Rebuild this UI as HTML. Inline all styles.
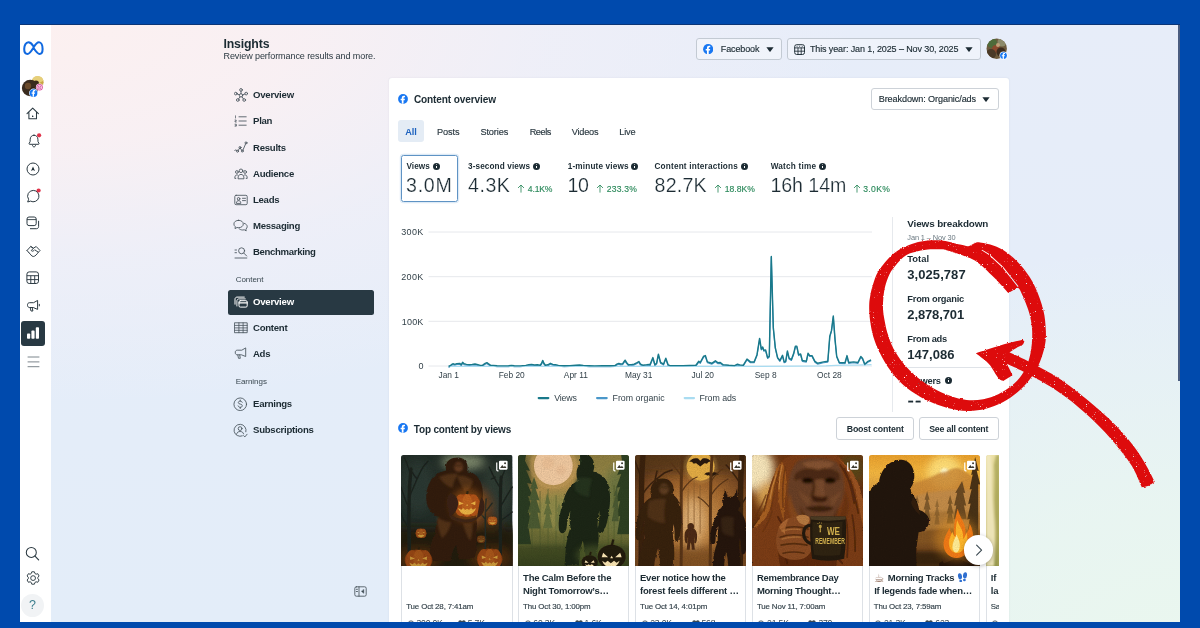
<!DOCTYPE html>
<html lang="en"><head><meta charset="utf-8"><title>Insights</title>
<style>
html,body{margin:0;padding:0}
body{width:1200px;height:628px;overflow:hidden;background:#004aad;position:relative;font-family:"Liberation Sans",sans-serif;color:#1c2b33}
#app{position:absolute;left:19.5px;top:25px;width:1160px;height:596.5px;overflow:hidden;
 background:
  radial-gradient(ellipse 820px 380px at 20px 0px, rgba(252,240,240,1) 0%, rgba(249,240,243,.95) 32%, rgba(243,240,247,.6) 62%, rgba(238,240,248,0) 100%),
  radial-gradient(ellipse 620px 420px at 1160px 640px, rgba(234,247,238,1) 0%, rgba(233,246,240,.85) 40%, rgba(230,240,246,0) 100%),
  linear-gradient(180deg,#e7edf9 0%,#e5edf9 40%,#e3edf9 100%);
 box-shadow:0 -1px 0 #0b3576}
#pg{position:absolute;left:-19.5px;top:-25px;width:1200px;height:628px;will-change:transform}
.abs{position:absolute;display:block}
.t{position:absolute;white-space:pre;display:block}
.t.m{-webkit-text-stroke:.15px currentColor}
.t.big{-webkit-text-stroke:.22px #fff}
.side{position:absolute;left:19.5px;top:25px;width:31px;height:597px;background:#fff}
.sidesel{position:absolute;left:20.7px;top:321.2px;width:24.4px;height:24.4px;border-radius:3px;background:#283943}
.help{position:absolute;left:20.9px;top:594.1px;width:23.2px;height:23.2px;border-radius:50%;background:#f1f3f5}
.navsel{position:absolute;left:228px;top:289.5px;width:146px;height:25px;border-radius:2.5px;background:#283943}
.btn{position:absolute;box-sizing:border-box;border:1px solid #c3cad3;border-radius:3px;background:rgba(255,255,255,.35)}
.btn.w{background:#fff;border-color:#cdd2d8}
.card{position:absolute;left:0;top:0}
.cardbg{position:absolute;left:388.7px;top:77.7px;width:620px;height:560px;background:#fff;border-radius:3px 3px 0 0;box-shadow:0 0 2px rgba(40,60,90,.10)}
.pill{position:absolute;left:398.3px;top:120px;width:25.7px;height:22.4px;border-radius:3px;background:#e4ecf5}
.vbox{position:absolute;box-sizing:border-box;left:400.9px;top:155px;width:56.7px;height:47.2px;border:1.3px solid #5f93c4;border-radius:2.5px;box-shadow:0 0 0 1.2px rgba(120,170,220,.25)}
.info{position:absolute;width:7.2px;height:7.2px;border-radius:50%;background:#1c2b33;display:block}
.info i{position:absolute;left:3px;top:3.1px;width:1.2px;height:2.6px;background:#fff;font-size:0;display:block}.info i::before{content:'';position:absolute;left:0;top:-1.8px;width:1.2px;height:1.1px;background:#fff;border-radius:50%}
.hr{position:absolute;height:1px;background:#dfe3e8}
.vr{position:absolute;width:1px;background:#e6e9ed}
.pc{position:absolute;box-sizing:border-box;top:455.2px;width:111.2px;height:190px;box-shadow:inset 0 0 0 1px #dde1e6;border-radius:2.5px;background:#fff;overflow:hidden}
.pc svg{position:absolute;left:0;top:0;display:block}
.posts{position:absolute;left:0;top:0;width:998.7px;height:628px;overflow:hidden}
.nextb{position:absolute;left:964px;top:535.4px;width:29.2px;height:29.2px;border-radius:50%;background:#fff;box-shadow:0 1px 4px rgba(0,0,0,.28)}

</style></head>
<body>
<div id="app"><div id="pg">

<div class="side"></div>
<!-- meta logo -->
<svg class="abs" style="left:23.2px;top:41.4px" width="20.8" height="14.2" viewBox="0 0 20.8 14.2"><path d="M10.4 5.2C8.7 2.4 7.2 1.2 5.4 1.2 2.9 1.2 1.2 4.5 1.2 8.1c0 3 1.2 4.9 3.3 4.9 2 0 3.400-2.100 5.900-6.300C12.700 2.800 14.100 1.200 16 1.200c2.200 0 3.600 3.200 3.600 6.900 0 3-1 4.900-3 4.900-2 0-3.400-2-6.200-6.300" fill="none" stroke="#1169e0" stroke-width="2.05" stroke-linecap="round" stroke-linejoin="round"/></svg>
<!-- avatar cluster -->
<svg class="abs" style="left:21px;top:74px" width="26" height="26" viewBox="0 0 26 26">
 <circle cx="16.6" cy="8.2" r="6" fill="#c9a545"/><path d="M11 6a6 6 0 0 1 11.500.800L16 10z" fill="#e6cf7a"/><circle cx="15" cy="9.500" r="3" fill="#3b2a1a"/>
 <circle cx="9.200" cy="14" r="8.300" fill="#3a2b1e"/><circle cx="7" cy="12" r="3.200" fill="#6b4a2a"/><circle cx="12" cy="16.500" r="3" fill="#241a12"/>
 <circle cx="18.600" cy="13.300" r="3.700" fill="#fff"/><circle cx="18.600" cy="13.300" r="3.200" fill="#d94b9c"/><rect x="16.700" y="11.400" width="3.800" height="3.800" rx="1.100" fill="none" stroke="#fff" stroke-width=".7"/><circle cx="18.600" cy="13.300" r=".8" fill="none" stroke="#fff" stroke-width=".6"/>
 <circle cx="12.500" cy="19.100" r="4.500" fill="#fff"/><circle cx="12.500" cy="19.100" r="3.900" fill="#1877f2"/><path d="M13 22.800v-3h1l.2-1.200H13v-.7c0-.4.200-.7.700-.7h.6v-1.100c-.3 0-.6-.1-1-.1-1 0-1.700.6-1.700 1.700v.9h-1v1.200h1v3z" fill="#fff"/>
</svg>
<!-- home -->
<svg class="abs" style="left:26.3px;top:107.2px" width="13.400" height="12.600" viewBox="0 0 13.400 12.600"><path d="M1 6.700 6.700 1.100l5.700 5.600M2.900 5.600v6.200h7.600V5.600M6.700 9.400v.1" fill="none" stroke="#2c3a42" stroke-width="1.050" stroke-linecap="round" stroke-linejoin="round"/><circle cx="6.700" cy="9.300" r=".7" fill="#1c2b33"/></svg>
<!-- bell -->
<svg class="abs" style="left:26.500px;top:133px" width="16" height="16" viewBox="0 0 16 16"><path d="M7 2.200c2.300 0 3.800 1.700 3.900 4l.1 2.400 1 1.900c.2.400 0 .8-.5.800H2.600c-.5 0-.7-.4-.5-.8l1-1.900.1-2.400c.1-2.300 1.600-4 3.800-4zM5.500 12.600c.2.800.8 1.300 1.500 1.300s1.300-.5 1.500-1.300" fill="none" stroke="#2c3a42" stroke-width="1" stroke-linejoin="round" stroke-linecap="round"/><circle cx="12.100" cy="2.300" r="2.100" fill="#e0334a"/></svg>
<!-- compass -->
<svg class="abs" style="left:26.300px;top:161.600px" width="14" height="14" viewBox="0 0 14 14"><circle cx="7" cy="7" r="6" fill="none" stroke="#2c3a42" stroke-width="1"/><path d="M7 4.400 9 9 7 8.100 5 9z" fill="#1c2b33"/></svg>
<!-- chat -->
<svg class="abs" style="left:26px;top:187.500px" width="16" height="16" viewBox="0 0 16 16"><path d="M7.300 2.400a5.700 5.700 0 1 1-2.800 10.700L1.700 14l.9-2.700A5.700 5.700 0 0 1 7.300 2.400z" fill="none" stroke="#2c3a42" stroke-width="1" stroke-linejoin="round"/><circle cx="12.600" cy="2.500" r="2.100" fill="#e0334a"/></svg>
<!-- layers -->
<svg class="abs" style="left:26px;top:216.200px" width="14" height="14" viewBox="0 0 14 14"><rect x="1" y="1" width="9.200" height="8.600" rx="2" fill="none" stroke="#2c3a42" stroke-width="1"/><path d="M12.600 5.200v5.400c0 1.200-.9 2.100-2.100 2.100H4.400" fill="none" stroke="#2c3a42" stroke-width="1" stroke-linecap="round"/><path d="M1 3.600h9.200" stroke="#2c3a42" stroke-width=".9"/></svg>
<!-- handshake -->
<svg class="abs" style="left:25.500px;top:244px" width="15" height="14" viewBox="0 0 15 14"><path d="M1 6.500 4.700 2.500 7.400 4.200 10.200 2.500 14 6.500 12.400 8.200M1 6.500l1.500 1.700M4.700 2.500 7.400 4.200 5.300 6.600c.8.900 1.900.7 2.600-.100l.7-.7 3.800 2.400-1.200 1.600-1.200 1.300-1.300 1-1.400.4-1.400-.5-3.400-3.800" fill="none" stroke="#2c3a42" stroke-width=".95" stroke-linejoin="round" stroke-linecap="round"/></svg>
<!-- table -->
<svg class="abs" style="left:26.200px;top:271.400px" width="13.400" height="13.400" viewBox="0 0 13.400 13.400"><rect x=".9" y=".9" width="11.600" height="11.600" rx="2.300" fill="none" stroke="#2c3a42" stroke-width="1"/><path d="M.9 4.700h11.600M.9 8.600h11.600M4.800 4.700v7.800M8.700 4.700v7.800" stroke="#2c3a42" stroke-width=".95" fill="none"/></svg>
<!-- megaphone -->
<svg class="abs" style="left:25.700px;top:299px" width="15" height="14" viewBox="0 0 15 14"><path d="M11.600 1.800v8.600L7.200 8.500H3.500c-1.100 0-2-.9-2-2v-.8c0-1.100.9-2 2-2h3.700zM4.200 8.700l.8 3.300h1.900L6.200 8.700M13.300 5.300v1.600" fill="none" stroke="#2c3a42" stroke-width="1" stroke-linejoin="round" stroke-linecap="round"/></svg>
<!-- selected insights -->
<div class="sidesel"></div>
<svg class="abs" style="left:26.200px;top:326.400px" width="14" height="14" viewBox="0 0 14 14"><rect x="1" y="7.400" width="3.200" height="5.300" rx=".8" fill="#fff"/><rect x="5.400" y="4.600" width="3.200" height="8.100" rx=".8" fill="#fff"/><rect x="9.800" y="1.300" width="3.200" height="11.400" rx=".8" fill="#fff"/></svg>
<!-- menu -->
<svg class="abs" style="left:26.500px;top:355.500px" width="13" height="12" viewBox="0 0 13 12"><path d="M.6 1h11.800M.6 5.900h11.800M.6 10.700h11.800" stroke="#7d868c" stroke-width="1"/></svg>
<!-- search -->
<svg class="abs" style="left:25px;top:545.600px" width="15" height="15" viewBox="0 0 15 15"><circle cx="6.300" cy="6.400" r="5" fill="none" stroke="#2c3a42" stroke-width="1.050"/><path d="M10 10.200 13.600 13.800" stroke="#2c3a42" stroke-width="1.200" stroke-linecap="round"/></svg>
<!-- gear -->
<svg class="abs" style="left:26px;top:570.800px" width="14.200" height="14.200" viewBox="-7.100 -7.100 14.200 14.200"><path d="M-1.300-6.300h2.600l.5 1.700 1.200.7 1.700-.5 1.300 2.300-1.200 1.300v1.400l1.200 1.300-1.300 2.300-1.700-.5-1.200.7-.5 1.700h-2.600l-.5-1.700-1.200-.7-1.700.5-1.300-2.300 1.200-1.300v-1.400l-1.200-1.300 1.300-2.300 1.700.5 1.200-.7z" fill="none" stroke="#2c3a42" stroke-width=".95" stroke-linejoin="round"/><circle r="2.400" fill="none" stroke="#2c3a42" stroke-width=".95"/></svg>
<!-- help -->
<div class="help"></div>
<span class="t" style="left:27.900px;top:598.300px;font-size:12.500px;line-height:15px;color:#3d7f8e;width:9px;text-align:center">?</span>

<div class="hdr">
<span class="t" style="left:223.50px;top:35.74px;font-size:12.3px;line-height:16.0px;font-weight:700;color:#1c2b33;letter-spacing:-0.168px;">Insights</span>
<span class="t" style="left:223.50px;top:51.35px;font-size:9.0px;line-height:11.7px;font-weight:400;color:#2a3840;letter-spacing:-0.072px;">Review performance results and more.</span>
</div>

<div class="navsel"></div>
<svg class="abs" style="left:233.6px;top:87.9px" width="14" height="14" viewBox="0 0 14 14"><g fill="none" stroke="#46525a" stroke-width=".85" stroke-linecap="round" stroke-linejoin="round"><circle cx="7" cy="7.400" r="1.700"/><circle cx="7" cy="1.900" r="1.350"/><circle cx="1.800" cy="5.600" r="1.350"/><circle cx="12.200" cy="5.600" r="1.350"/><circle cx="3.800" cy="12" r="1.350"/><circle cx="10.200" cy="12" r="1.350"/><path d="M7 3.300v2.400M3.100 6l2.300.8M10.900 6l-2.300.8M4.600 10.900l1.400-2.100M9.400 10.900 8 8.800"/></g></svg>
<svg class="abs" style="left:234.1px;top:115.1px" width="13" height="12" viewBox="0 0 13 12"><g fill="none" stroke="#46525a" stroke-width=".85" stroke-linecap="round" stroke-linejoin="round"><path d="M5 1.800h7.200M5 6h7.200M5 10.200h7.200"/><path d="M1.500 .8v2.200M1 5h1.200v1H1v1h1.300M1 9.200h1.300v2H1m.3-1h1" stroke-width=".7"/></g></svg>
<svg class="abs" style="left:233.6px;top:141.3px" width="14" height="12" viewBox="0 0 14 12"><g fill="none" stroke="#46525a" stroke-width=".85" stroke-linecap="round" stroke-linejoin="round"><path d="M.8 9.600c.8-1.300 1.400-1.300 2 0M4.100 9.600 5.600 7.200 M6.300 7.300 7.700 9.200 M8.900 9.200 11.600 2.900"/><circle cx="3.500" cy="10.200" r="1"/><circle cx="6" cy="6.500" r="1"/><circle cx="8.300" cy="10" r="1"/><circle cx="12" cy="1.900" r="1"/></g></svg>
<svg class="abs" style="left:233.6px;top:167.6px" width="14" height="12" viewBox="0 0 14 12"><g fill="none" stroke="#46525a" stroke-width=".85" stroke-linecap="round" stroke-linejoin="round"><circle cx="7" cy="2.800" r="1.800"/><circle cx="2.900" cy="4" r="1.400"/><circle cx="11.100" cy="4" r="1.400"/><path d="M4 10.400c0-2.700 1.200-4 3-4s3 1.300 3 4zM1.800 10.400H.8c0-2.300.7-3.500 2.100-3.500.5 0 .9.100 1.200.4M12.200 10.400h1c0-2.300-.7-3.500-2.100-3.500-.5 0-.9.100-1.200.4"/></g></svg>
<svg class="abs" style="left:233.6px;top:193.6px" width="14" height="12" viewBox="0 0 14 12"><g fill="none" stroke="#46525a" stroke-width=".85" stroke-linecap="round" stroke-linejoin="round"><rect x=".8" y="1.300" width="12.400" height="9.400" rx="1.300"/><circle cx="4.600" cy="4.800" r="1.300"/><path d="M2.400 9c0-1.500.8-2.300 2.200-2.300S6.800 7.500 6.800 9zM8.500 4.300h3M8.500 6.600h3"/></g></svg>
<svg class="abs" style="left:233.1px;top:219.2px" width="15" height="13" viewBox="0 0 15 13"><g fill="none" stroke="#46525a" stroke-width=".85" stroke-linecap="round" stroke-linejoin="round"><path d="M5.600 1.300c2.700 0 4.700 1.600 4.700 3.700S8.300 8.700 5.600 8.700c-.6 0-1.100-.1-1.600-.2L2 9.600l.3-1.900C1.400 7 .9 6.100.9 5c0-2.100 2-3.700 4.700-3.700z"/><path d="M11.400 4.400c1.700.5 2.800 1.700 2.800 3.200 0 1-.5 1.900-1.300 2.500l.3 1.800-1.900-1.100c-.5.100-1 .2-1.600.2-1.600 0-3-.6-3.800-1.500"/></g></svg>
<svg class="abs" style="left:233.6px;top:245.6px" width="14" height="13" viewBox="0 0 14 13"><g fill="none" stroke="#46525a" stroke-width=".85" stroke-linecap="round" stroke-linejoin="round"><circle cx="7.600" cy="4.800" r="3"/><path d="M9.800 7.100 12.700 10M1 4h1.500M1 6.700h1.500M1 12h11.800"/></g></svg>
<svg class="abs" style="left:233.6px;top:295.7px" width="14" height="12" viewBox="0 0 14 12"><g fill="none" stroke="#ffffff" stroke-width="1" stroke-linecap="round" stroke-linejoin="round"><path d="M1 8.200V3.100C1 2 1.900 1.100 3 1.100h7.300"/><path d="M2.900 10V4.900c0-1.100.9-2 2-2h6.400" opacity=".9"/><rect x="5" y="4.700" width="8.200" height="6.400" rx="1.300"/><path d="M5 6.900h8.200" stroke-width="1.300"/></g></svg>
<svg class="abs" style="left:233.6px;top:322.1px" width="14" height="11.5" viewBox="0 0 14 11.5"><g fill="none" stroke="#46525a" stroke-width=".85" stroke-linecap="round" stroke-linejoin="round"><rect x=".8" y=".8" width="12.400" height="9.900"/><path d="M.8 3.400h12.400M.8 5.900h12.400M.8 8.300h12.400M4.900.8v9.900M9.100.8v9.900" stroke-width=".8"/></g></svg>
<svg class="abs" style="left:233.6px;top:347.4px" width="14" height="13" viewBox="0 0 14 13"><g fill="none" stroke="#46525a" stroke-width=".85" stroke-linecap="round" stroke-linejoin="round"><path d="M11.700 1.300v8.200L7.400 7.800H3.300C2.200 7.800 1.300 7 1.300 6V5c0-1 .9-1.800 2-1.800h4.100zM3.800 8l.7 3.300h1.800L5.700 8"/></g></svg>
<svg class="abs" style="left:233.3px;top:396.8px" width="14.5" height="14.5" viewBox="0 0 14.5 14.5"><g fill="none" stroke="#46525a" stroke-width=".85" stroke-linecap="round" stroke-linejoin="round"><circle cx="7.250" cy="7.250" r="6.300"/><path d="M9.200 5.300c-.3-.8-1-1.200-2-1.200-1.100 0-1.900.6-1.900 1.500 0 2.100 4 .9 4 3.100 0 .9-.8 1.600-2 1.600-1.100 0-1.900-.5-2.200-1.400M7.250 3v1.100M7.250 10.300v1.200" stroke-width=".85"/></g></svg>
<svg class="abs" style="left:233.1px;top:422.5px" width="15" height="15" viewBox="0 0 15 15"><g fill="none" stroke="#46525a" stroke-width=".85" stroke-linecap="round" stroke-linejoin="round"><path d="M12.900 8.800A6 6 0 1 0 9.300 12.900"/><circle cx="7.100" cy="5.600" r="1.900"/><path d="M3.600 11.200c.3-1.700 1.500-2.700 3.500-2.700s3.100.9 3.500 2.400"/><path d="M10.600 12.700l1.300 1.200 2.200-2.700"/></g></svg>
<svg class="abs" style="left:353.5px;top:586.0px" width="13" height="11" viewBox="0 0 13 11"><g fill="none" stroke="#46525a" stroke-width=".85" stroke-linecap="round" stroke-linejoin="round"><rect x=".8" y=".8" width="11.400" height="9.400" rx="1.500"/><path d="M5 .8v9.400M2.300 3.300h1.200M2.300 5.500h1.200"/><path d="M9.800 3.700v3.600L7.600 5.500z" fill="#34424a" stroke-width=".5"/></g></svg>

<div class="nav">
<span class="t" style="left:253.00px;top:89.26px;font-size:9.6px;line-height:12.5px;font-weight:700;color:#1c2b33;letter-spacing:-0.221px;">Overview</span>
<span class="t" style="left:253.00px;top:115.46px;font-size:9.6px;line-height:12.5px;font-weight:700;color:#1c2b33;letter-spacing:-0.262px;">Plan</span>
<span class="t" style="left:253.00px;top:141.66px;font-size:9.6px;line-height:12.5px;font-weight:700;color:#1c2b33;letter-spacing:-0.257px;">Results</span>
<span class="t" style="left:253.00px;top:167.96px;font-size:9.6px;line-height:12.5px;font-weight:700;color:#1c2b33;letter-spacing:-0.281px;">Audience</span>
<span class="t" style="left:253.00px;top:193.96px;font-size:9.6px;line-height:12.5px;font-weight:700;color:#1c2b33;letter-spacing:-0.287px;">Leads</span>
<span class="t" style="left:253.00px;top:220.06px;font-size:9.6px;line-height:12.5px;font-weight:700;color:#1c2b33;letter-spacing:-0.288px;">Messaging</span>
<span class="t" style="left:253.00px;top:246.46px;font-size:9.6px;line-height:12.5px;font-weight:700;color:#1c2b33;letter-spacing:-0.346px;">Benchmarking</span>
<span class="t" style="left:235.70px;top:274.79px;font-size:8.0px;line-height:10.4px;font-weight:400;color:#3a4850;letter-spacing:-0.047px;">Content</span>
<span class="t" style="left:253.00px;top:296.06px;font-size:9.6px;line-height:12.5px;font-weight:700;color:#ffffff;letter-spacing:-0.221px;">Overview</span>
<span class="t" style="left:253.00px;top:322.26px;font-size:9.6px;line-height:12.5px;font-weight:700;color:#1c2b33;letter-spacing:-0.268px;">Content</span>
<span class="t" style="left:253.00px;top:348.26px;font-size:9.6px;line-height:12.5px;font-weight:700;color:#1c2b33;letter-spacing:-0.312px;">Ads</span>
<span class="t" style="left:235.70px;top:376.99px;font-size:8.0px;line-height:10.4px;font-weight:400;color:#3a4850;letter-spacing:-0.053px;">Earnings</span>
<span class="t" style="left:253.00px;top:398.36px;font-size:9.6px;line-height:12.5px;font-weight:700;color:#1c2b33;letter-spacing:-0.268px;">Earnings</span>
<span class="t" style="left:253.00px;top:424.36px;font-size:9.6px;line-height:12.5px;font-weight:700;color:#1c2b33;letter-spacing:-0.256px;">Subscriptions</span>
</div>

<div class="btn" style="left:696.4px;top:38.100px;width:85.300px;height:21.800px"></div>
<svg class="abs" style="left:702.700px;top:44px" width="10.400" height="10.400" viewBox="0 0 10.400 10.400"><circle cx="5.200" cy="5.200" r="5.100" fill="#1877f2"/><path d="M5.750 10.200V6.500h1.200l.25-1.500H5.750v-.9c0-.5.250-.85.850-.85h.7V1.950C6.950 1.900 6.500 1.850 6.050 1.850c-1.300 0-2.100.75-2.100 2.100V5H2.700v1.500h1.250v3.700z" fill="#fff"/></svg>
<svg class="abs" style="left:765.500px;top:46.800px" width="8" height="5" viewBox="0 0 8 5"><path d="M.4.300h7.200L4.500 4.500c-.3.300-.7.300-1 0z" fill="#1c2b33"/></svg>
<div class="btn" style="left:787px;top:38.100px;width:193.800px;height:21.800px"></div>
<svg class="abs" style="left:793.700px;top:43.500px" width="11.200" height="11.200" viewBox="0 0 11.200 11.200"><rect x=".7" y=".7" width="9.800" height="9.800" rx="1.900" fill="none" stroke="#1c2b33" stroke-width=".95"/><path d="M.7 3.900h9.800M.7 7.200h9.800M4 3.900v6.600M7.200 3.900v6.600M3 2.300h.1M5.600 2.300h.1M8.200 2.300h.1" fill="none" stroke="#1c2b33" stroke-width=".85" stroke-linecap="round"/></svg>
<svg class="abs" style="left:964.600px;top:46.800px" width="8" height="5" viewBox="0 0 8 5"><path d="M.4.300h7.200L4.500 4.500c-.3.300-.7.300-1 0z" fill="#1c2b33"/></svg>
<!-- top-right avatar -->
<svg class="abs" style="left:986px;top:38px" width="22" height="22" viewBox="0 0 22 22">
 <defs><clipPath id="avc"><circle cx="10.700" cy="10.700" r="10.200"/></clipPath></defs>
 <g clip-path="url(#avc)"><rect width="22" height="22" fill="#6d5a3c"/><circle cx="6" cy="5" r="5" fill="#4e6b3a"/><circle cx="16" cy="4" r="4.500" fill="#8c8a6a"/><circle cx="10" cy="11" r="4" fill="#8b4a2e"/><circle cx="15" cy="14" r="4.500" fill="#3c2c1e"/><circle cx="5" cy="16" r="5" fill="#4a3a28"/><circle cx="12" cy="7" r="2" fill="#c0a078"/></g>
 <circle cx="17.500" cy="17.600" r="4" fill="#fff"/><circle cx="17.500" cy="17.600" r="3.400" fill="#1877f2"/><path d="M17.900 20.900v-2.700h.9l.15-1.050H17.900v-.6c0-.35.150-.6.600-.6h.5v-.95c-.25-.05-.55-.1-.85-.1-.9 0-1.500.55-1.500 1.500v.75h-.9v1.050h.9v2.700z" fill="#fff"/>
</svg>

<span class="t m" style="left:720.80px;top:44.25px;font-size:9.0px;line-height:11.7px;font-weight:400;color:#1c2b33;letter-spacing:-0.129px;">Facebook</span>
<span class="t m" style="left:809.90px;top:44.25px;font-size:9.0px;line-height:11.7px;font-weight:400;color:#1c2b33;letter-spacing:-0.111px;">This year: Jan 1, 2025 – Nov 30, 2025</span>
<div class="card">

<div class="cardbg"></div>
<svg class="abs" style="left:398px;top:94px" width="10" height="10" viewBox="0 0 10.400 10.400"><circle cx="5.200" cy="5.200" r="5.100" fill="#1877f2"/><path d="M5.750 10.200V6.500h1.200l.25-1.500H5.750v-.9c0-.5.250-.85.850-.85h.7V1.950C6.950 1.900 6.500 1.850 6.050 1.850c-1.300 0-2.100.75-2.100 2.100V5H2.700v1.500h1.250v3.700z" fill="#fff"/></svg>
<div class="btn w" style="left:871px;top:87.800px;width:127.500px;height:22px"></div>
<svg class="abs" style="left:982px;top:96.600px" width="8" height="5" viewBox="0 0 8 5"><path d="M.4.300h7.200L4.500 4.500c-.3.300-.7.300-1 0z" fill="#1c2b33"/></svg>
<div class="pill"></div>
<div class="vbox"></div>
<div class="vr" style="left:891.700px;top:217.300px;height:194.300px"></div>

<span class="t" style="left:413.90px;top:93.07px;font-size:10.1px;line-height:13.1px;font-weight:700;color:#1c2b33;letter-spacing:-0.134px;">Content overview</span>
<span class="t m" style="left:878.70px;top:93.7px;font-size:9.1px;line-height:11.8px;font-weight:400;color:#1c2b33;letter-spacing:-0.104px;">Breakdown: Organic/ads</span>
<span class="t" style="left:405.33px;top:126.11px;font-size:9.2px;line-height:12.0px;font-weight:700;color:#1d62bf;letter-spacing:-0.135px;">All</span>
<span class="t m" style="left:437.00px;top:126.11px;font-size:9.2px;line-height:12.0px;font-weight:400;color:#2a3840;letter-spacing:-0.117px;">Posts</span>
<span class="t m" style="left:480.40px;top:126.11px;font-size:9.2px;line-height:12.0px;font-weight:400;color:#2a3840;letter-spacing:-0.116px;">Stories</span>
<span class="t m" style="left:529.70px;top:126.11px;font-size:9.2px;line-height:12.0px;font-weight:400;color:#2a3840;letter-spacing:-0.46px;">Reels</span>
<span class="t m" style="left:571.70px;top:126.11px;font-size:9.2px;line-height:12.0px;font-weight:400;color:#2a3840;letter-spacing:-0.223px;">Videos</span>
<span class="t m" style="left:619.30px;top:126.11px;font-size:9.2px;line-height:12.0px;font-weight:400;color:#2a3840;letter-spacing:-0.19px;">Live</span>
<span class="t" style="left:406.50px;top:161.54px;font-size:8.2px;line-height:10.7px;font-weight:700;color:#1c2b33;letter-spacing:0.044px;">Views</span>
<span class="info" style="left:433.0px;top:162.6px"><i></i></span>
<span class="t" style="left:468.00px;top:161.54px;font-size:8.2px;line-height:10.7px;font-weight:700;color:#1c2b33;letter-spacing:0.112px;">3-second views</span>
<span class="info" style="left:533.1px;top:162.6px"><i></i></span>
<span class="t" style="left:567.70px;top:161.54px;font-size:8.2px;line-height:10.7px;font-weight:700;color:#1c2b33;letter-spacing:0.171px;">1-minute views</span>
<span class="info" style="left:631.3px;top:162.6px"><i></i></span>
<span class="t" style="left:654.50px;top:161.54px;font-size:8.2px;line-height:10.7px;font-weight:700;color:#1c2b33;letter-spacing:0.195px;">Content interactions</span>
<span class="info" style="left:740.9px;top:162.6px"><i></i></span>
<span class="t" style="left:770.70px;top:161.54px;font-size:8.2px;line-height:10.7px;font-weight:700;color:#1c2b33;letter-spacing:0.212px;">Watch time</span>
<span class="info" style="left:819.3px;top:162.6px"><i></i></span>
<span class="t big" style="left:406.00px;top:172.98px;font-size:19.6px;line-height:25.5px;font-weight:400;color:#1c2b33;letter-spacing:0.759px;">3.0M</span>
<span class="t big" style="left:468.00px;top:172.98px;font-size:19.6px;line-height:25.5px;font-weight:400;color:#1c2b33;letter-spacing:0.522px;">4.3K</span>
<span class="t big" style="left:567.60px;top:172.98px;font-size:19.6px;line-height:25.5px;font-weight:400;color:#1c2b33;letter-spacing:-0.398px;">10</span>
<span class="t big" style="left:654.60px;top:172.98px;font-size:19.6px;line-height:25.5px;font-weight:400;color:#1c2b33;letter-spacing:0.196px;">82.7K</span>
<span class="t big" style="left:770.40px;top:172.98px;font-size:19.6px;line-height:25.5px;font-weight:400;color:#1c2b33;letter-spacing:-0.038px;">16h 14m</span>
<svg class="abs" style="left:517.3px;top:184.3px" width="8" height="9" viewBox="0 0 8 9"><path d="M4 8.6V1M1 4l3-3 3 3" fill="none" stroke="#2d8a5c" stroke-width=".85"/></svg>
<span class="t m" style="left:527.80px;top:184.0px;font-size:8.6px;line-height:11.2px;font-weight:400;color:#2d8a5c;letter-spacing:-0.166px;">4.1K%</span>
<svg class="abs" style="left:596.2px;top:184.3px" width="8" height="9" viewBox="0 0 8 9"><path d="M4 8.6V1M1 4l3-3 3 3" fill="none" stroke="#2d8a5c" stroke-width=".85"/></svg>
<span class="t m" style="left:606.70px;top:184.0px;font-size:8.6px;line-height:11.2px;font-weight:400;color:#2d8a5c;letter-spacing:0.191px;">233.3%</span>
<svg class="abs" style="left:714.2px;top:184.3px" width="8" height="9" viewBox="0 0 8 9"><path d="M4 8.6V1M1 4l3-3 3 3" fill="none" stroke="#2d8a5c" stroke-width=".85"/></svg>
<span class="t m" style="left:724.70px;top:184.0px;font-size:8.6px;line-height:11.2px;font-weight:400;color:#2d8a5c;letter-spacing:0.032px;">18.8K%</span>
<svg class="abs" style="left:852.8px;top:184.3px" width="8" height="9" viewBox="0 0 8 9"><path d="M4 8.6V1M1 4l3-3 3 3" fill="none" stroke="#2d8a5c" stroke-width=".85"/></svg>
<span class="t m" style="left:863.30px;top:184.0px;font-size:8.6px;line-height:11.2px;font-weight:400;color:#2d8a5c;letter-spacing:0.294px;">3.0K%</span>
<svg class="abs" style="left:395px;top:215px" width="490" height="195" viewBox="395 215 490 195">
<g stroke="#e6e8ec" stroke-width="1"><path d="M428.500 232h443.500M428.500 276.700h443.500M428.500 321.300h443.500M428.500 366h443.500"/></g>
<polyline points="448.6,367.4 450.1,366.6 452.0,365.1 453.4,364.7 454.9,365.3 456.8,364.5 459.7,364.3 461.2,365.7 462.6,363.2 464.1,364.7 466.4,365.3 469.3,365.5 472.2,365.3 475.0,364.9 477.9,365.5 480.2,366.3 482.7,366.1 485.2,364.3 486.9,363.6 488.5,364.7 490.4,366.1 493.3,366.3 497.1,366.6 502.8,366.8 508.6,366.6 511.5,366.3 514.3,366.6 520.1,366.8 525.8,366.3 528.7,365.7 531.6,365.3 534.5,365.9 537.3,365.7 540.2,366.1 541.6,364.2 542.7,361.3 543.9,364.2 545.4,366.1 547.9,365.7 550.4,364.2 552.7,365.3 555.6,365.7 558.4,366.3 564.2,366.6 569.9,366.5 575.7,366.1 579.5,365.9 583.3,366.3 589.1,366.6 594.8,366.8 602.5,366.6 610.2,366.6 615.0,366.5 616.9,365.1 618.8,364.3 620.7,364.9 622.6,364.7 624.0,362.6 625.1,361.1 626.5,363.4 628.4,365.7 631.3,365.5 634.1,365.1 636.6,363.8 638.9,362.4 640.5,365.1 642.8,366.1 646.6,365.7 649.5,365.3 650.0,365.7 652.9,358.5 654.9,365.7 656.6,364.2 658.4,355.1 660.6,363.4 663.5,365.1 665.8,359.1 668.1,365.7 670.1,366.5 683.0,366.5 695.9,366.2 698.8,362.2 700.2,363.4 703.7,357.1 705.4,356.5 707.4,362.8 711.7,364.2 715.4,361.7 718.0,363.7 720.3,363.4 723.2,365.7 728.9,366.2 734.6,366.5 737.5,365.1 740.4,366.0 743.2,366.2 747.0,359.9 750.4,362.8 754.1,362.8 757.0,355.6 759.6,339.3 761.3,349.9 762.7,347.9 763.9,351.3 765.6,350.8 767.6,358.5 769.3,357.1 771.3,257.3 773.3,328.4 775.3,348.5 777.6,358.5 779.9,361.4 782.5,356.2 784.2,362.8 785.7,362.2 787.4,351.9 789.1,359.1 791.4,360.5 793.7,354.2 795.4,347.0 796.8,347.0 798.6,355.6 800.6,354.8 802.3,361.4 806.3,362.2 808.0,354.2 809.7,356.5 812.0,356.5 814.9,362.2 817.8,364.2 823.5,362.8 827.8,362.2 829.8,337.0 831.5,331.3 833.3,316.9 835.0,339.9 836.7,357.1 839.3,363.4 845.0,363.7 847.0,356.5 848.7,363.4 853.6,362.8 857.9,363.4 860.8,357.4 862.5,359.1 864.8,365.1 868.0,362.2 871.1,360.8" fill="none" stroke="#4a97c9" stroke-width="1.1" stroke-linejoin="round"/>
<polyline points="448.6,366.3 760.0,366.3 800.0,366.1 826.0,365.9 836.0,365.3 846.0,365.1 856.0,365.2 864.0,364.8 871.5,364.6" fill="none" stroke="#a9dcf1" stroke-width="1.2" stroke-linejoin="round"/>
<polyline points="448.6,366.5 450.1,365.7 452.0,364.2 453.4,363.8 454.9,364.4 456.8,363.6 459.7,363.4 461.2,364.8 462.6,362.3 464.1,363.8 466.4,364.4 469.3,364.6 472.2,364.4 475.0,364.0 477.9,364.6 480.2,365.4 482.7,365.2 485.2,363.4 486.9,362.7 488.5,363.8 490.4,365.2 493.3,365.4 497.1,365.7 502.8,365.9 508.6,365.7 511.5,365.4 514.3,365.7 520.1,365.9 525.8,365.4 528.7,364.8 531.6,364.4 534.5,365.0 537.3,364.8 540.2,365.2 541.6,363.3 542.7,360.4 543.9,363.3 545.4,365.2 547.9,364.8 550.4,363.3 552.7,364.4 555.6,364.8 558.4,365.4 564.2,365.7 569.9,365.6 575.7,365.2 579.5,365.0 583.3,365.4 589.1,365.7 594.8,365.9 602.5,365.7 610.2,365.7 615.0,365.6 616.9,364.2 618.8,363.4 620.7,364.0 622.6,363.8 624.0,361.7 625.1,360.2 626.5,362.5 628.4,364.8 631.3,364.6 634.1,364.2 636.6,362.9 638.9,361.5 640.5,364.2 642.8,365.2 646.6,364.8 649.5,364.4 650.0,364.8 652.9,357.6 654.9,364.8 656.6,363.3 658.4,354.2 660.6,362.5 663.5,364.2 665.8,358.2 668.1,364.8 670.1,365.6 683.0,365.6 695.9,365.3 698.8,361.3 700.2,362.5 703.7,356.2 705.4,355.6 707.4,361.9 711.7,363.3 715.4,360.8 718.0,362.8 720.3,362.5 723.2,364.8 728.9,365.3 734.6,365.6 737.5,364.2 740.4,365.1 743.2,365.3 747.0,359.0 750.4,361.9 754.1,361.9 757.0,354.7 759.6,338.4 761.3,349.0 762.7,347.0 763.9,350.4 765.6,349.9 767.6,357.6 769.3,356.2 771.3,256.4 773.3,327.5 775.3,347.6 777.6,357.6 779.9,360.5 782.5,355.3 784.2,361.9 785.7,361.3 787.4,351.0 789.1,358.2 791.4,359.6 793.7,353.3 795.4,346.1 796.8,346.1 798.6,354.7 800.6,353.9 802.3,360.5 806.3,361.3 808.0,353.3 809.7,355.6 812.0,355.6 814.9,361.3 817.8,363.3 823.5,361.9 827.8,361.3 829.8,336.1 831.5,330.4 833.3,316.0 835.0,339.0 836.7,356.2 839.3,362.5 845.0,362.8 847.0,355.6 848.7,362.5 853.6,361.9 857.9,362.5 860.8,356.5 862.5,358.2 864.8,364.2 868.0,361.3 871.1,359.9" fill="none" stroke="#19798a" stroke-width="1.45" stroke-linejoin="round"/>
<path d="M538.700 398.100h9.600" stroke="#19798a" stroke-width="2.200" stroke-linecap="round"/>
<path d="M597.100 398.100h9.600" stroke="#4a97c9" stroke-width="2.200" stroke-linecap="round"/>
<path d="M684.700 398.100h9.300" stroke="#a9dcf1" stroke-width="2.200" stroke-linecap="round"/>
</svg>
<span class="t" style="left:401.30px;top:226.7px;font-size:9.0px;line-height:11.7px;font-weight:400;color:#34424a;letter-spacing:0.292px;">300K</span>
<span class="t" style="left:401.30px;top:272.15px;font-size:9.0px;line-height:11.7px;font-weight:400;color:#34424a;letter-spacing:0.292px;">200K</span>
<span class="t" style="left:401.80px;top:316.65px;font-size:9.0px;line-height:11.7px;font-weight:400;color:#34424a;letter-spacing:0.167px;">100K</span>
<span class="t" style="left:418.48px;top:361.05px;font-size:9.0px;line-height:11.7px;font-weight:400;color:#34424a;">0</span>
<span class="t" style="left:438.45px;top:369.55px;font-size:8.4px;line-height:10.9px;font-weight:400;color:#34424a;">Jan 1</span>
<span class="t" style="left:498.66px;top:369.55px;font-size:8.4px;line-height:10.9px;font-weight:400;color:#34424a;">Feb 20</span>
<span class="t" style="left:563.87px;top:369.55px;font-size:8.4px;line-height:10.9px;font-weight:400;color:#34424a;">Apr 11</span>
<span class="t" style="left:624.97px;top:369.55px;font-size:8.4px;line-height:10.9px;font-weight:400;color:#34424a;">May 31</span>
<span class="t" style="left:691.62px;top:369.55px;font-size:8.4px;line-height:10.9px;font-weight:400;color:#34424a;">Jul 20</span>
<span class="t" style="left:754.75px;top:369.55px;font-size:8.4px;line-height:10.9px;font-weight:400;color:#34424a;">Sep 8</span>
<span class="t" style="left:817.06px;top:369.55px;font-size:8.4px;line-height:10.9px;font-weight:400;color:#34424a;">Oct 28</span>
<span class="t" style="left:554.20px;top:393.0px;font-size:8.8px;line-height:11.4px;font-weight:400;color:#34424a;letter-spacing:-0.163px;">Views</span>
<span class="t" style="left:612.50px;top:393.0px;font-size:8.8px;line-height:11.4px;font-weight:400;color:#34424a;letter-spacing:0.031px;">From organic</span>
<span class="t" style="left:699.40px;top:393.0px;font-size:8.8px;line-height:11.4px;font-weight:400;color:#34424a;letter-spacing:-0.045px;">From ads</span>

<span class="t" style="left:907.30px;top:217.76px;font-size:9.9px;line-height:12.9px;font-weight:700;color:#1c2b33;letter-spacing:-0.12px;">Views breakdown</span>
<span class="t" style="left:907.30px;top:232.99px;font-size:7.4px;line-height:9.6px;font-weight:400;color:#6a7880;letter-spacing:-0.101px;">Jan 1 – Nov 30</span>
<span class="t" style="left:907.30px;top:252.71px;font-size:9.4px;line-height:12.2px;font-weight:700;color:#1c2b33;letter-spacing:-0.001px;">Total</span>
<span class="t" style="left:907.30px;top:266.9px;font-size:13.0px;line-height:16.9px;font-weight:700;color:#1c2b33;letter-spacing:0.062px;">3,025,787</span>
<span class="t" style="left:907.30px;top:292.66px;font-size:9.3px;line-height:12.1px;font-weight:700;color:#1c2b33;letter-spacing:-0.226px;">From organic</span>
<span class="t" style="left:907.30px;top:306.8px;font-size:13.0px;line-height:16.9px;font-weight:700;color:#1c2b33;letter-spacing:-0.127px;">2,878,701</span>
<span class="t" style="left:907.30px;top:332.56px;font-size:9.3px;line-height:12.1px;font-weight:700;color:#1c2b33;letter-spacing:-0.295px;">From ads</span>
<span class="t" style="left:907.30px;top:346.7px;font-size:13.0px;line-height:16.9px;font-weight:700;color:#1c2b33;letter-spacing:0.029px;">147,086</span>
<div class="hr" style="left:907px;top:366.6px;width:91.5px"></div>
<span class="t" style="left:907.30px;top:374.96px;font-size:9.3px;line-height:12.1px;font-weight:700;color:#1c2b33;letter-spacing:-0.212px;">Viewers</span>
<span class="info" style="left:944.6px;top:376.7px"><i></i></span>
<span class="t" style="left:907.60px;top:388.77px;font-size:19.0px;line-height:24.7px;font-weight:400;color:#1c2b33;letter-spacing:0.972px;-webkit-text-stroke:.3px #1c2b33;">--</span>
<svg class="abs" style="left:398.200px;top:423.400px" width="10" height="10" viewBox="0 0 10.400 10.400"><circle cx="5.200" cy="5.200" r="5.100" fill="#1877f2"/><path d="M5.750 10.200V6.500h1.200l.25-1.500H5.750v-.9c0-.5.250-.85.850-.85h.7V1.950C6.950 1.900 6.500 1.850 6.050 1.850c-1.300 0-2.100.75-2.100 2.100V5H2.700v1.500h1.250v3.700z" fill="#fff"/></svg>
<div class="btn w" style="left:836.400px;top:417px;width:77.600px;height:22.600px"></div>
<div class="btn w" style="left:919px;top:417px;width:79.700px;height:22.600px"></div>

<span class="t" style="left:413.80px;top:422.51px;font-size:10.0px;line-height:13.0px;font-weight:700;color:#1c2b33;letter-spacing:-0.182px;">Top content by views</span>
<span class="t sb" style="left:846.70px;top:423.9px;font-size:8.8px;line-height:11.4px;font-weight:700;color:#1c2b33;letter-spacing:-0.157px;">Boost content</span>
<span class="t sb" style="left:929.20px;top:423.9px;font-size:8.8px;line-height:11.4px;font-weight:700;color:#1c2b33;letter-spacing:-0.2px;">See all content</span>
</div>

<div class="posts">

<svg width="0" height="0" style="position:absolute"><defs>
 <filter id="b1" x="-20%" y="-20%" width="140%" height="140%"><feGaussianBlur stdDeviation="1"/></filter>
 <filter id="b2" x="-30%" y="-30%" width="160%" height="160%"><feGaussianBlur stdDeviation="2.200"/></filter>
 <filter id="b3" x="-40%" y="-40%" width="180%" height="180%"><feGaussianBlur stdDeviation="3.200"/></filter>
 <filter id="b4" x="-50%" y="-50%" width="200%" height="200%"><feGaussianBlur stdDeviation="4.500"/></filter>
 <filter id="b6" x="-60%" y="-60%" width="220%" height="220%"><feGaussianBlur stdDeviation="7"/></filter>
 <filter id="b05" x="-10%" y="-10%" width="120%" height="120%"><feGaussianBlur stdDeviation=".55"/></filter>
 <filter id="fur" x="-5%" y="-5%" width="110%" height="110%"><feTurbulence type="fractalNoise" baseFrequency=".35" numOctaves="2" seed="3" result="n"/><feDisplacementMap in="SourceGraphic" in2="n" scale="2.500" xChannelSelector="R" yChannelSelector="G"/><feGaussianBlur stdDeviation=".4"/></filter>
 <filter id="grain" x="0" y="0" width="100%" height="100%"><feTurbulence type="fractalNoise" baseFrequency=".9" numOctaves="2" seed="11"/><feColorMatrix type="matrix" values="0 0 0 0 0  0 0 0 0 0  0 0 0 0 0  .9 .9 .9 0 -1.000"/></filter>
 <g id="badge"><path d="M1 2.400v7.200c0 .6.400 1 1 1h.700" fill="none" stroke="#fff" stroke-width="1.200"/><rect x="3.200" y=".5" width="8.600" height="9" rx="1.100" fill="#fff"/><path d="M4.300 7.800 6.500 4.900l1.600 1.800 1.100-1.100 1.500 2.200z" fill="#3c3a30"/><circle cx="9.300" cy="3" r="1" fill="#3c3a30"/></g>
 <g id="pk"><ellipse cx="0" cy="0" rx="10" ry="8.600" fill="#a84a14"/><ellipse cx="-4.800" cy="0" rx="4.400" ry="8.200" fill="#bf5a1a"/><ellipse cx="4.800" cy="0" rx="4.400" ry="8.200" fill="#bf5a1a"/><ellipse cx="0" cy="0" rx="3.800" ry="8.600" fill="#cf6a20"/><path d="M-6.200-3l3.600 1.600-3.400 1.300zM6.200-3l-3.600 1.600 3.400 1.300zM-.8.400h1.600L0-1zM-6.600 2l2.300 1.300 1.400-1.200 1.500 1.500L0 2.500l1.400 1.100 1.500-1.500 1.400 1.200L6.600 2c-1 3.200-3.500 4.900-6.600 4.900S-5.600 5.200-6.600 2z" fill="#ffc24a"/><path d="M-.8-8.400l.4-2.400 1.600.3-.4 2.200z" fill="#3a2a12"/></g>
</defs></svg>

<!-- card 1 -->
<div class="pc" style="left:401.400px"><svg width="111.200" height="111.200" viewBox="0 0 111 111">
 <rect width="111" height="111" fill="#232e28"/>
 <g filter="url(#b4)"><ellipse cx="62" cy="7" rx="22" ry="8" fill="#7c866a"/><ellipse cx="17" cy="32" rx="17" ry="26" fill="#2b3831"/><ellipse cx="96" cy="36" rx="15" ry="28" fill="#2e3b33"/><rect x="-5" y="72" width="121" height="45" fill="#231a10"/><ellipse cx="66" cy="52" rx="25" ry="22" fill="#7c4418" opacity=".75"/><ellipse cx="17" cy="104" rx="22" ry="12" fill="#6e3810" opacity=".5"/><ellipse cx="89" cy="103" rx="21" ry="12" fill="#6e3810" opacity=".5"/><ellipse cx="90" cy="68" rx="10" ry="8" fill="#4a2c12" opacity=".7"/></g>
 <g filter="url(#b05)" fill="none" stroke="#1b231e" stroke-linecap="round"><path d="M8 111C9 80 6 50 10 14" stroke-width="3.500"/><path d="M9 56C4 46 3 40 0 32M9 40C14 30 16 22 22 12M10 22C8 14 6 8 3 2M9 72C3 68 1 62 0 58M22 12l5-6M16 24l-6-8" stroke-width="1.400"/><path d="M99 111C100 70 98 50 100 22" stroke-width="3.200"/><path d="M99 52C104 44 107 38 111 32M100 34C94 26 92 20 88 12M99 66C104 62 108 60 111 57M100 24l4-10M94 22l-4 2" stroke-width="1.400"/><path d="M84 96C85 80 83 62 85 44M85 56l6-8M84 64l-5-6" stroke-width="1.500" stroke="#222b25"/></g>
 <g filter="url(#fur)"><path d="M57 2.500c5.500 0 9 3.500 9.500 9 .1 1.500 0 3-.4 4.500 6 1.500 11 5 13.500 11 2.500 7 3 15 1 23-1.500 5-3.500 8-6 10 1.500 6 1.500 12 .5 18 1 7 1 14-.5 20-.5 3-2 5-4 6H58c-1.500-5-2.500-10-2.800-15-1.500 2.500-2.800 5-3.700 8-1 4-1.500 7-2 9H31c-2-3-2.500-7-2-11 .5-6 2-11 4.500-15 .5-7 2-13 4.500-18-5.500-2-9.500-6-11.500-11-2.500-8-1.500-17 2.500-24 2.500-6 8-10 16-11.500-.3-1.500-.4-3-.2-4.500.5-5.500 5-8.500 12.200-8.500z" fill="#301d10"/></g>
 <g filter="url(#b1)"><path d="M38 22c6-3 13-4 19-3-3 4-5 9-5.500 14-5-1.500-10-5.500-13.500-11zM56 21c6-1 12 1 16 5-1 5-4 9-8 11-3-5-6-10-8-16zM36 62c4 3 9 5 14 5-1 6-4 12-9 16-3-6-5-13-5-21zM62 68c3 1 6 1 9 0 1 6 0 12-2 18-3-5-6-11-7-18z" fill="#5d3a1c" opacity=".75"/><ellipse cx="57.500" cy="12" rx="4.500" ry="5" fill="#6b4024" opacity=".85"/><path d="M54 10.500h7" stroke="#1f120a" stroke-width="1.200"/></g>
 <circle cx="66" cy="50" r="17" fill="#ff8a1e" opacity=".3" filter="url(#b3)"/>
 <g transform="translate(66 50.200) scale(1.360 1.340)" style="filter:brightness(.92)"><use href="#pk"/></g>
 <g filter="url(#b05)"><path d="M49 38c5 1 8 5 8 10 0 6-3 11-9 14 0-4-.5-8-2-12-1-4 0-8 3-12zM80 42c3 3 4 8 3 13-1 4-3 6-7 8 1-7 2-14 4-21z" fill="#3a2414"/><path d="M48 60c5 2 10 4 16 4.500 5 0 10-1.500 14-3.500-1 3-4 5-8 6-6 1.500-14 0-20-3z" fill="#3f2615"/></g>
 <g transform="translate(17.500 105) scale(1.380 1.250)" style="filter:brightness(.78)"><use href="#pk"/></g>
 <g transform="translate(88.500 104) scale(1.280 1.250)" style="filter:brightness(.8)"><use href="#pk"/></g>
 <g transform="translate(20 78.200) scale(.55)" opacity=".75"><use href="#pk"/></g>
 <g transform="translate(91.300 65.800) scale(.5)" opacity=".8"><use href="#pk"/></g>
 <g transform="translate(80 84) scale(.42)" opacity=".45"><use href="#pk"/></g>
 <rect width="111" height="111" fill="#d8c8a0" filter="url(#grain)" opacity=".10"/>
 <use href="#badge" x="94.600" y="5.200"/>
</svg></div>

<!-- card 2 -->
<div class="pc" style="left:518.300px"><svg width="111.200" height="111.200" viewBox="0 0 111 111">
 <defs><linearGradient id="g2" x1="0" y1="0" x2="0" y2="1"><stop offset="0" stop-color="#8c7c40"/><stop offset=".3" stop-color="#968a48"/><stop offset=".62" stop-color="#78763a"/><stop offset=".85" stop-color="#5a5e2e"/><stop offset="1" stop-color="#3c4422"/></linearGradient></defs>
 <rect width="111" height="111" fill="url(#g2)"/>
 <g filter="url(#b4)"><ellipse cx="36" cy="22" rx="34" ry="26" fill="#b08e4c"/><ellipse cx="40" cy="56" rx="24" ry="18" fill="#8f8a4a"/><ellipse cx="98" cy="46" rx="12" ry="34" fill="#6e7640"/><ellipse cx="6" cy="30" rx="8" ry="30" fill="#3c4a28"/></g>
 <circle cx="35.300" cy="10.700" r="19.400" fill="#f0c9a0"/><circle cx="30" cy="8" r="6" fill="#e8bb90" opacity=".6" filter="url(#b1)"/><circle cx="43" cy="15" r="5" fill="#e6b88e" opacity=".55" filter="url(#b1)"/><circle cx="35.300" cy="10.700" r="21.500" fill="none" stroke="#e0b070" stroke-width="3" opacity=".35" filter="url(#b1)"/>
 <g stroke="#4e5a2c" stroke-width="1.100" opacity=".55" filter="url(#b05)"><path d="M14 30V100M22 36V100M30 34V100M38 40V100M46 44V100M96 30V100M103 26V100M90 40V100"/></g>
 <g filter="url(#b05)"><path d="M0 0h8l-1 6 5 10-4-1 6 14-5-1 6 14-5-1 5 15-5-1 4 14-4 0 3 20H0z" fill="#2a3a20"/><path d="M16 22l4 12-2.500-.5 4 12-3-.5 4 13-3-.5 3 16h-13l3-16-3 .5 4-13-3 .5 4-12-2.500.5z" fill="#4c5a30"/><path d="M29 38l3.500 11-2-.4 3.500 11-2.500-.4 3 14H25l3-14-2.500.4 3.500-11-2 .4z" fill="#646e3a"/><path d="M41 48l3 9-2-.3 3 10-2-.3 2 9h-8l2-9-2 .3 3-10-2 .3z" fill="#747a42"/><path d="M111 0h-8l1 8-5 12 4-1-5 14 4-1-5 15 5-1-4 16 4-1-3 18h12z" fill="#2f3f22"/><path d="M99 30l-3.500 11 2-.4-3.500 12 2.500-.4-3 14h7z" fill="#4c5a32"/></g>
 <rect x="-5" y="90" width="121" height="26" fill="#34401e" opacity=".6" filter="url(#b2)"/>
 <g filter="url(#fur)"><path d="M62 0h8c3.500 1.500 5.500 4.500 6 9 .3 2.500 0 5-1 7.500 7 2 12.500 6 15 12.500 2.500 9 2.500 19 .5 29-.8 6.500-1.800 12-4.500 17-1 2.500-2.800 3.500-4.500 2.800-1.800-.8-2.200-3.500-1.500-6.500 1-5.500 1.800-10.500 1-16-.8 5.500-1.500 10.500-1.500 15 1.500 8 1.500 17-.5 26.500l1 13.200H68l-.5-9c-.8-5.500-1.600-10.500-2.800-15.500-1.800 5-3 10-3 15.500l-1 9H46.500l.8-11c.2-9 2-18 5-26.500-1-5.500-1-11 0-17-1.800 5-3 10-3.500 15-.2 4-1.500 6.500-3.500 7.500-2 .5-4-1-4.500-4-.8-7.500.5-16 3.800-23.500 1.200-8.500 4-15.500 9-20.500 2-2 4-3 6-4-1-3-1.500-6.500-1-10 .5-3 2-5.500 3.400-6.500z" fill="#1b2718"/></g>
 <path d="M58 24c5-2 11-2 16 0-2 6-3 12-3 18-6-1-11-3-14-7-1-4 0-8 1-11z" fill="#2a3a24" opacity=".7" filter="url(#b1)"/>
 <ellipse cx="76" cy="100" rx="18" ry="10" fill="#56642e" opacity=".55" filter="url(#b3)"/>
 <g filter="url(#b05)"><ellipse cx="93.500" cy="101.500" rx="14" ry="12" fill="#241a0c"/><path d="M92.500 90l1.500-6 2.200.5-1.200 5.500z" fill="#241a0c"/><path d="M85 97.500l5 4.500h-6.500zM102 97.500l-5 4.500h6.500zM92 103h3l-1.500-2.500zM84 105.500l3 2 2.500-2 3.200 2.500 3.200-2.500 2.500 2 3-2c-1.500 4.500-5 6.500-8.700 6.500s-7.200-2-8.700-6.500z" fill="#fae6b4"/><ellipse cx="71.500" cy="107" rx="8" ry="7" fill="#241a0c"/><path d="M71 100l.8-3.500 1.700.4-.6 3.100z" fill="#241a0c"/><path d="M67.500 105l3 2.500h-4zM75.500 105l-3 2.500h4zM67 109l2 1 1.500-1 1.500 1 1.500-1 2 1c-1 2-2.500 2.500-4.300 2.500S68 111 67 109z" fill="#fae6b4"/></g>
 <rect width="111" height="111" fill="#e8e0a0" filter="url(#grain)" opacity=".10"/>
 <use href="#badge" x="94.600" y="5.200"/>
</svg></div>

<!-- card 3 -->
<div class="pc" style="left:635.300px"><svg width="111.200" height="111.200" viewBox="0 0 111 111">
 <defs><radialGradient id="g3" cx=".53" cy=".6" r=".7"><stop offset="0" stop-color="#d9a466"/><stop offset=".22" stop-color="#c48a48"/><stop offset=".5" stop-color="#a4682e"/><stop offset=".82" stop-color="#6e4220"/><stop offset="1" stop-color="#4a2c14"/></radialGradient></defs>
 <rect width="111" height="111" fill="url(#g3)"/>
 <g filter="url(#b4)"><rect x="-5" y="-5" width="121" height="22" fill="#5a3818" opacity=".85"/><rect x="-5" y="92" width="121" height="24" fill="#7a4c22" opacity=".8"/><ellipse cx="58" cy="66" rx="10" ry="24" fill="#e4b880" opacity=".75"/></g>
 <circle cx="65.500" cy="11.600" r="14" fill="#e2aa3e"/><circle cx="65.500" cy="11.600" r="17" fill="#f0c060" opacity=".22" filter="url(#b1)"/>
 <g fill="#2a1a0e"><path d="M54 7c2.200-3.400 5.500-4.500 9-3.400l2.200 2.300 2.200-2.300c3.500-1.100 6.800 0 9 3.400-2.200-.6-3.400 0-4.500 1.700-1.700-1.100-3.400-.6-4.500 1.100l-2.200 1.700-2.200-1.700c-1.100-1.700-2.800-2.200-4.500-1.100-1.100-1.700-2.300-2.300-4.500-1.700z"/><path d="M69 19.500c1.600-2.100 3.700-2.700 5.800-2.100l1.600 1.400 1.600-1.400c2.100-.6 4.200 0 5.800 2.100-1.400-.3-2.300 0-3.200 1.100-1.100-.7-2.100-.4-2.800.6l-1.400 1.100-1.400-1.100c-.7-1-1.700-1.300-2.800-.6-.9-1.100-1.800-1.400-3.200-1.100z"/></g>
 <g filter="url(#b05)" fill="none" stroke="#3b2210" stroke-linecap="round"><path d="M6 111C7 70 5 30 8 0" stroke-width="5.500"/><path d="M7 40C13 30 19 26 29 18M7 24C3 16 2 10 0 6M7 56C13 50 17 48 23 44M29 18l8-3M20 25l2-9" stroke-width="1.600"/><path d="M46 111C47 70 45 40 47 0" stroke-width="3" stroke="#5a3618"/><path d="M47 36C52 28 56 24 62 22M46 50C40 42 36 38 30 34M47 22C43 16 40 12 36 8" stroke-width="1.200" stroke="#5a3618"/><path d="M75 111C76 70 74 40 77 0" stroke-width="3" stroke="#5a3618"/><path d="M76 40C81 32 85 28 93 24M76 54C71 48 67 44 63 42M76 26C80 20 84 16 88 14" stroke-width="1.200" stroke="#5a3618"/><path d="M105 111C106 70 104 30 107 0" stroke-width="5.500"/><path d="M106 30C101 22 97 16 91 10M106 50C108 46 110 44 111 42M106 18l-6-10" stroke-width="1.600"/><path d="M59 80V26M65 78V30M53 80V34" stroke-width="1.100" stroke="#8e5e2e" opacity=".7"/></g>
 <g filter="url(#fur)"><path d="M28 23.500c6 0 10.500 4.500 10.500 10.500 0 2-.4 3.800-1 5.300 4.500 3 7.500 8 8.500 14.700 1 8 1 16-1 24 0 4-1 7-3 8-1.500 0-2.500-1.500-2.500-4 0-5 0-9-1-13-1 6-1 12 0 18 1 8 1 16 0 24H25c0-7-.5-12-2-18-2 6-3 11-4 18H3.500c0-10 2-19 6-28-1-6-1-12 0-17-2 4-3 9-3.500 14 0 3-1 5-2.500 5-2 0-3-2-3-5C.5 72 1.500 63 5.500 55c2-6 6-10 11-13-.7-1.700-1-3.500-1-5.500 0-8 5.500-13 12.500-13z" fill="#38200f"/></g>
 <g filter="url(#b1)"><path d="M14 46c5-2 11-3 17-2-2 8-2 16-1 24-6 0-12-2-17-6-1-6 0-11 1-16z" fill="#5e3c1e" opacity=".65"/><ellipse cx="29" cy="34" rx="4.800" ry="5.500" fill="#6e4828" opacity=".75"/><path d="M25.500 32h7.500" stroke="#1f1108" stroke-width="1.100"/></g>
 <g filter="url(#fur)"><path d="M90 34l2.500 8c2-.8 4-.8 6 0l3.500-8.500 1 10.500c2 2 3 5 2 8l-1 4c4 3 6 8 7 14 1 8 1 16 0 24-.5 3-1.500 5-3 5s-2-2-2-4c0-5-.5-9-1.500-13-.5 5-.5 10 0 15 1 5 1 10 .5 15H93c0-5-.5-10-2-15-1 5-2 10-2 15H77.500c0-9 2-18 5-26 0-5 0-10 1-15-2 4-3 8-3 13 0 3-1 5-2.500 5-2 0-3-2-3-5 0-8 2-16 6-23 2-5 4-8 7-10-1-3-1-6 0-9z" fill="#28180e"/></g>
 <path d="M86 63c4-2 9-2 13 0-1 6-1 12 0 18-4 0-9-1-12-4-1-5-1-10-1-14z" fill="#4a301c" opacity=".5" filter="url(#b1)"/>
 <g filter="url(#b05)"><path d="M55.700 68c2 0 3.300 1.300 3.300 3.300 0 .7-.2 1.400-.5 2 2 1 3.200 3 3.400 6 .2 3 0 6-.8 8-.3.800-.8 1-1.300.8-.5-.2-.6-1-.5-2 .2-1.500.2-3 0-4.500-.3 3.500-.3 7 .2 10.500l.3 2.500h-3l-.5-4.500-.6-3-.6 3-.5 4.500h-3l.3-2.500c.5-3.500.5-7 .2-10.500-.2 1.500-.2 3 0 4.500.1 1 0 1.800-.5 2s-1-0-1.300-.8c-.8-2-1-5-.8-8 .2-3 1.400-5 3.400-6-.3-.6-.5-1.300-.5-2 0-2 1.300-3.300 3.300-3.300z" fill="#4e2c12"/></g>
 <rect width="111" height="111" fill="#f0d8a0" filter="url(#grain)" opacity=".12"/>
 <use href="#badge" x="94.600" y="5.200"/>
</svg></div>

<!-- card 4 -->
<div class="pc" style="left:752.200px"><svg width="111.200" height="111.200" viewBox="0 0 111 111">
 <rect width="111" height="111" fill="#6e3610"/>
 <g filter="url(#b4)"><ellipse cx="4" cy="14" rx="18" ry="22" fill="#f9e8bc"/><ellipse cx="16" cy="40" rx="12" ry="14" fill="#d8a050"/><ellipse cx="100" cy="14" rx="14" ry="14" fill="#5a4418"/><ellipse cx="102" cy="66" rx="14" ry="40" fill="#5e2c0e"/><ellipse cx="10" cy="92" rx="20" ry="24" fill="#341a08"/></g>
 <g filter="url(#fur)"><path d="M28 8c6-7 16-10 28-10h24c10 4 17 14 21 28 4 16 7 30 10 44v41H0V74c6-6 10-14 13-24 3-14 8-30 15-42z" fill="#7c3e14"/><path d="M28 8c-6 10-10 24-13 38-3 10-8 20-15 28 7-3 12-8 16-15 5-12 8-27 12-51z" fill="#a86024"/><path d="M30 6c4 8 5 18 4 30-1 10-3 20-2 30-4-10-6-22-6-34 0-10 1-18 4-26z" fill="#a25a20" opacity=".9"/><path d="M86 4c7 6 13 16 16 28 4 14 6 28 9 40V46c-3-14-7-26-15-34-3-3-6-6-10-8z" fill="#9a5220"/><path d="M30 70c2 8 6 14 12 18 8 4 22 4 30 0 6-4 10-10 12-18 3 10 3 22 0 41H28c-3-16-2-30 2-41z" fill="#5e2c0e"/></g>
 <g filter="url(#b05)" fill="none" stroke-linecap="round"><path d="M22 22c-4 10-7 22-10 34M27 16c-4 12-6 24-8 38M33 12c-2 12-3 26-2 40M14 40c-3 8-6 14-10 20M20 56c-2 8-5 14-9 20" stroke="#6a3210" stroke-width="1.600" opacity=".7"/><path d="M92 14c5 10 8 22 10 34M98 26c3 10 6 20 8 32M88 10c6 8 10 18 13 30M100 60c2 10 3 22 3 36M94 64c2 12 2 24 1 38" stroke="#4e240a" stroke-width="1.800" opacity=".75"/><path d="M34 72c-2 10-2 22 1 36M70 90c6 4 12 8 20 18M26 62c2 4 4 8 8 10" stroke="#46200a" stroke-width="2" opacity=".7"/><path d="M24 20c-3 8-5 16-6 24M30 10c-2 8-3 16-3 24" stroke="#e0a050" stroke-width="1" opacity=".6"/></g>
 <g filter="url(#b1)"><path d="M46 6c8-4 28-4 38 1 5 6 8 14 8 24 0 12-4 22-10 30-5 6-12 9-20 9s-15-4-20-10c-5-8-7-18-6-30 1-10 4-18 10-24z" fill="#6a4026"/><path d="M50 8c8-3 24-3 32 0-2 4-8 7-16 7s-13-3-16-7z" fill="#8a5632" opacity=".85"/><path d="M44 18c6-5 15-6 22-3 6-3 14-2 20 2 2 3 2 6 1 9-6-3-13-3-19-1-1 7 0 12 3 16-4 3-9 3-13 0 2-5 3-10 2-16-5-2-12-2-17 1-1-3-1-6 1-8z" fill="#4e2a12"/><ellipse cx="55.500" cy="25.500" rx="6" ry="3" fill="#2a140a"/><ellipse cx="78" cy="25.500" rx="6" ry="3" fill="#2a140a"/><ellipse cx="55.500" cy="25" rx="4.500" ry="1.600" fill="#140a04"/><ellipse cx="78" cy="25" rx="4.500" ry="1.600" fill="#140a04"/><path d="M62.500 25c1 6 1 11-.5 15 3.500 2 7.500 2 11 0-1.500-4-1.500-9-.5-15-3-1-7-1-10 0z" fill="#7c4e30" opacity=".9"/><path d="M60 41c4 2.500 11 2.500 15 0 1 2 0 4.500-2 5.500-3.500 1-7.500 1-11 0-2-1-3-3.500-2-5.500z" fill="#3a1c0c"/><path d="M46 34c2 8 6 14 12 18-1-4-1-7 0-10-5-1-9-4-12-8zM90 34c-2 8-6 14-12 18 1-4 1-7 0-10 5-1 9-4 12-8z" fill="#7a4a2a" opacity=".8"/><path d="M53 53c8-3 21-3 29 0-4 3-9 4-14.500 4S57 56 53 53z" fill="#3e2010"/><path d="M48 50c3 8 8 14 14 17 4 1 8 1 12 0 6-3 10-9 12-17 0 10-3 20-9 26-5 3-13 3-18 0-7-6-11-16-11-26z" fill="#5a3016" opacity=".9"/><path d="M38 38c2 14 8 26 18 32-7 1-13-2-17-8-3-8-3-16-1-24z" fill="#8a4a1c" opacity=".85"/><path d="M92 34c1 14-3 26-12 36 7 0 12-3 15-9 3-9 2-18-3-27z" fill="#6a3412" opacity=".85"/></g>
 <g filter="url(#b05)"><path d="M27 72c3-6 9-10 16-10 4-3 9-3 13 0 3 2 4 5 4 9l1 16c0 7-3 13-9 16-8 3-17 2-24-3-5-8-5-18-1-28z" fill="#8a4c22"/><path d="M29 74c8-3 18-3 27 0M28 82c9-3 19-3 28 0M29 90c8-2 17-2 26 0M31 98c7-1.500 14-1.500 21 0" fill="none" stroke="#5a2e10" stroke-width="1.600" stroke-linecap="round"/><path d="M44 62c4-3 9-3 13 0 1 3 0 6-3 8-4 0-8-2-10-8z" fill="#b87a40"/><path d="M27 72c2-4 6-7 10-9-3 5-4 10-4 16-3-2-5-4-6-7z" fill="#b06a32" opacity=".85"/><path d="M30 76c6-2 12-2.500 18-1.500M30 84c6-2 12-2.500 18-2" fill="none" stroke="#b8783c" stroke-width="1.400" stroke-linecap="round" opacity=".7"/></g>
 <g><path d="M58.500 61.500h35c.8 14 .4 29-1.500 42-10 2.600-22 2.600-32 0-2-13-2.500-28-1.500-42z" fill="#241a0e"/><path d="M58.500 61.500h35l-.1 3c-11.500 1.500-23 1.500-34.800 0z" fill="#4c3c24"/><path d="M60.500 67c8 1 20 1 30-.5-.5 10-1 22-2.500 33-8 1.500-18 1.500-26 0-1.500-11-2-22-1.500-32.500z" fill="#362a14" opacity=".7"/><path d="M59.500 70c-5 0-8 3-8 8s3 10 9 11" fill="none" stroke="#241a0e" stroke-width="3.200"/>
 <path d="M66.800 70.500c.7-1.300 2.100-1.300 2.700 0 .4 1.100 0 2.300-.9 2.900l.3 3.600h-1.500l.3-3.600c-.9-.6-1.300-1.800-.9-2.900z" fill="#c9a648"/><circle cx="65.800" cy="68.500" r=".5" fill="#c9a648"/><circle cx="67.500" cy="67.600" r=".5" fill="#c9a648"/><circle cx="69.500" cy="67.800" r=".5" fill="#c9a648"/>
 <text x="74.800" y="80" font-family="'Liberation Sans',sans-serif" font-weight="700" font-size="11.300" fill="#d9b650" textLength="13" lengthAdjust="spacingAndGlyphs">WE</text>
 <text x="63.200" y="89.300" font-family="'Liberation Sans',sans-serif" font-weight="700" font-size="9.600" fill="#d9b650" textLength="29.500" lengthAdjust="spacingAndGlyphs">REMEMBER</text></g>
 <rect width="111" height="111" fill="#f0d8a0" filter="url(#grain)" opacity=".12"/>
 <use href="#badge" x="94.600" y="5.200"/>
</svg></div>

<!-- card 5 -->
<div class="pc" style="left:869.100px"><svg width="111.200" height="111.200" viewBox="0 0 111 111">
 <defs><linearGradient id="g5" x1="0" y1="0" x2="0" y2="1"><stop offset="0" stop-color="#e9a02c"/><stop offset=".16" stop-color="#f3b640"/><stop offset=".42" stop-color="#c98c40"/><stop offset=".7" stop-color="#94622c"/><stop offset="1" stop-color="#4a2a0e"/></linearGradient></defs>
 <rect width="111" height="111" fill="url(#g5)"/>
 <circle cx="75.500" cy="17" r="17" fill="#ffe07a" opacity=".95" filter="url(#b4)"/><circle cx="75.500" cy="17.200" r="4.200" fill="#fff8c8" filter="url(#b1)"/>
 <g filter="url(#b1)"><path d="M38 30c8-2 18-5 28-10 4-2 7-3 10-3 4-2 8-4 12-4 6 1 12 6 23 15v34H38z" fill="#c98636" opacity=".8"/><path d="M38 44c12-5 28-8 44-9 10-1 20 0 29 3v34H38z" fill="#c28c4a" opacity=".85"/><path d="M38 62c20-6 48-8 73-4v30H38z" fill="#a97636" opacity=".85"/><path d="M38 78c24-5 50-6 73-3v36H38z" fill="#7a4e20" opacity=".8"/></g>
 <g filter="url(#b05)"><path d="M106 2l3.500 14-2-.5 3.500 14-2-.4V80H98l2.500-16-2.500.5 3.500-16-2.500.5 3.500-15-2 .5 3-15-1.500.4z" fill="#4a3012"/><path d="M93 26l3 12-2-.4 3 13-2.200-.4 2.700 14H84.500l2.700-14-2.200.4 3-13-2 .4z" fill="#6a4820"/><path d="M81 40l2.500 9-1.600-.3 2.500 10-1.800-.3 2 10h-7.200l2-10-1.800.3 2.500-10-1.600.3z" fill="#7a5426" opacity=".9"/><path d="M58 36l2.500 9-1.600-.3 2.600 10-1.800-.3 2 11h-7.400l2-11-1.800.3 2.600-10-1.600.3z" fill="#6a4a22" opacity=".75"/><path d="M68 44l2 8-1.400-.3 2 9-1.500-.3 1.500 9h-5.200l1.500-9-1.500.3 2-9-1.400.3z" fill="#7a5628" opacity=".6"/><path d="M48 40l2 8-1.400-.3 2 9h-5.200l2-9-1.400.3z" fill="#6a4a22" opacity=".6"/></g>
 <rect x="40" y="96" width="71" height="16" fill="#34200c" opacity=".9" filter="url(#b2)"/>
 <g filter="url(#fur)"><path d="M-2 40c3-6 7-10 12-13 1-8 5-15 11-19 4-3 9-4 13-3 6 1 10 6 11 13 .5 4 0 7-1 10-.5 2-1.500 4-3 5l1 4c4 5 7 11 8 18 4 1 8 4 9.500 8 1 4 0 8-3 11-2 2-5 3-7 3-1 8-2.500 16-2.500 24l.5 10H-2z" fill="#22130a"/></g>
 <path d="M44 42c4 5 6 11 7 18-4-3-7-7-9-12z" fill="#3a2410" opacity=".7" filter="url(#b05)"/>
 <g><path d="M70 108l9-6 9 3 10-4 7 7v3H70z" fill="#24140a"/><path d="M72 104l22-8 2 3.500-21 8.500zM80 96l25 10-2 3.500-24-10.500z" fill="#3a2210"/>
 <circle cx="88" cy="84" r="22" fill="#ffa428" opacity=".38" filter="url(#b4)"/>
 <g filter="url(#b05)" transform="translate(88 104) scale(1.180 1.120) translate(-88 -104)"><path d="M88.500 59c2 9 7.500 13 6.500 23 2.500-3 3.500-6 3.500-10 3 6 4 12 2 19-2 7-7 12-13 12s-11-5-11-12c0-6 3-10 5-15 .8 4 2 6 4 8-1-9 1-17 3-25z" fill="#f07a14"/><path d="M88 69c2 6 6 10 5 17 2-2 2.500-4 3-6 1 5 1 9-1 12.500-2 4-4 6-7 6-4 0-7-4-7-9 0-4 2-7 3-10 1 3 1.500 4 3 5-.5-6 0-10.500 1-15.500z" fill="#ffb62c"/><path d="M87.500 82c1.500 4 3.500 7 2.500 12-.5 2.500-1.500 4-3 4s-3-2-3-5c0-4 2-7 3.500-11z" fill="#ffec94"/></g></g>
 <rect width="111" height="111" fill="#ffe0a0" filter="url(#grain)" opacity=".08"/>
 <use href="#badge" x="94.600" y="5.200"/>
</svg></div>

<!-- card 6 -->
<div class="pc" style="left:986.400px"><svg width="111.200" height="111.200" viewBox="0 0 111 111">
 <defs><linearGradient id="g6" x1="0" y1="0" x2="0" y2="1"><stop offset="0" stop-color="#ece0a4"/><stop offset=".35" stop-color="#c9c078"/><stop offset=".7" stop-color="#b7ae62"/><stop offset="1" stop-color="#8f9148"/></linearGradient></defs>
 <rect width="111" height="111" fill="url(#g6)"/>
 <g filter="url(#b1)"><path d="M0 0h5c2 20 1 40 3 60s1 36 0 51H0z" fill="#f2e9c0" opacity=".9"/><path d="M8 10c2 20 0 40 2 60s2 30 1 41h3V0h-4z" fill="#a9a556" opacity=".8"/></g>
</svg></div>

<div class="nextb"></div>
<svg class="abs" style="left:974.800px;top:543.900px" width="8" height="12.400" viewBox="0 0 8 12.400"><path d="M1.600 1.200 6.600 6.200 1.600 11.200" fill="none" stroke="#3a4850" stroke-width="1.100" stroke-linecap="round" stroke-linejoin="round"/></svg>

<span class="t m" style="left:406.20px;top:601.84px;font-size:7.9px;line-height:10.3px;font-weight:400;color:#34424a;letter-spacing:-0.13px;">Tue Oct 28, 7:41am</span>
<span class="t" style="left:416.40px;top:618.2px;font-size:8.6px;line-height:11.2px;font-weight:400;color:#3a4850;letter-spacing:-0.159px;">300.0K</span>
<span class="t" style="left:467.70px;top:618.2px;font-size:8.6px;line-height:11.2px;font-weight:400;color:#3a4850;letter-spacing:-0.152px;">5.7K</span>
<svg class="abs" style="left:406.7px;top:619.6px" width="8" height="7" viewBox="0 0 8 7"><path d="M.5 3.500C1.500 1.700 2.700 1 4 1s2.500.7 3.500 2.500C6.500 5.300 5.300 6 4 6S1.500 5.300.5 3.500z" fill="none" stroke="#3a4850" stroke-width=".9"/><circle cx="4" cy="3.500" r="1.100" fill="#3a4850"/></svg>
<svg class="abs" style="left:457.7px;top:619.700px" width="8" height="7" viewBox="0 0 8 7"><path d="M4 6.600C1.500 4.800.3 3.500.3 2.200.3 1.100 1.100.3 2.200.3 2.900.3 3.600.7 4 1.300 4.400.7 5.100.3 5.800.3 6.900.3 7.700 1.100 7.700 2.200c0 1.300-1.200 2.600-3.700 4.400z" fill="#3a4850"/></svg>
<span class="t" style="left:523.10px;top:572.36px;font-size:9.5px;line-height:12.3px;font-weight:700;color:#1c2b33;letter-spacing:-0.225px;">The Calm Before the</span>
<span class="t" style="left:523.10px;top:584.76px;font-size:9.5px;line-height:12.3px;font-weight:700;color:#1c2b33;letter-spacing:-0.243px;">Night Tomorrow’s…</span>
<span class="t m" style="left:523.10px;top:601.84px;font-size:7.9px;line-height:10.3px;font-weight:400;color:#34424a;letter-spacing:-0.131px;">Thu Oct 30, 1:00pm</span>
<span class="t" style="left:533.30px;top:618.2px;font-size:8.6px;line-height:11.2px;font-weight:400;color:#3a4850;letter-spacing:-0.156px;">60.3K</span>
<span class="t" style="left:584.60px;top:618.2px;font-size:8.6px;line-height:11.2px;font-weight:400;color:#3a4850;letter-spacing:-0.152px;">1.6K</span>
<svg class="abs" style="left:523.6px;top:619.6px" width="8" height="7" viewBox="0 0 8 7"><path d="M.5 3.500C1.500 1.700 2.700 1 4 1s2.500.7 3.500 2.500C6.500 5.300 5.300 6 4 6S1.500 5.300.5 3.500z" fill="none" stroke="#3a4850" stroke-width=".9"/><circle cx="4" cy="3.500" r="1.100" fill="#3a4850"/></svg>
<svg class="abs" style="left:574.6px;top:619.700px" width="8" height="7" viewBox="0 0 8 7"><path d="M4 6.600C1.500 4.800.3 3.500.3 2.200.3 1.100 1.100.3 2.200.3 2.900.3 3.600.7 4 1.300 4.400.7 5.100.3 5.800.3 6.900.3 7.700 1.100 7.700 2.200c0 1.300-1.200 2.600-3.700 4.400z" fill="#3a4850"/></svg>
<span class="t" style="left:640.00px;top:572.36px;font-size:9.5px;line-height:12.3px;font-weight:700;color:#1c2b33;letter-spacing:-0.218px;">Ever notice how the</span>
<span class="t" style="left:640.00px;top:584.76px;font-size:9.5px;line-height:12.3px;font-weight:700;color:#1c2b33;letter-spacing:-0.199px;">forest feels different …</span>
<span class="t m" style="left:640.00px;top:601.84px;font-size:7.9px;line-height:10.3px;font-weight:400;color:#34424a;letter-spacing:-0.13px;">Tue Oct 14, 4:01pm</span>
<span class="t" style="left:650.20px;top:618.2px;font-size:8.6px;line-height:11.2px;font-weight:400;color:#3a4850;letter-spacing:-0.156px;">23.0K</span>
<span class="t" style="left:701.50px;top:618.2px;font-size:8.6px;line-height:11.2px;font-weight:400;color:#3a4850;letter-spacing:-0.167px;">568</span>
<svg class="abs" style="left:640.5px;top:619.6px" width="8" height="7" viewBox="0 0 8 7"><path d="M.5 3.500C1.500 1.700 2.700 1 4 1s2.500.7 3.500 2.500C6.500 5.300 5.300 6 4 6S1.500 5.300.5 3.500z" fill="none" stroke="#3a4850" stroke-width=".9"/><circle cx="4" cy="3.500" r="1.100" fill="#3a4850"/></svg>
<svg class="abs" style="left:691.5px;top:619.700px" width="8" height="7" viewBox="0 0 8 7"><path d="M4 6.600C1.500 4.800.3 3.500.3 2.200.3 1.100 1.100.3 2.200.3 2.900.3 3.600.7 4 1.300 4.400.7 5.100.3 5.800.3 6.900.3 7.700 1.100 7.700 2.200c0 1.300-1.200 2.600-3.700 4.400z" fill="#3a4850"/></svg>
<span class="t" style="left:756.90px;top:572.36px;font-size:9.5px;line-height:12.3px;font-weight:700;color:#1c2b33;letter-spacing:-0.263px;">Remembrance Day</span>
<span class="t" style="left:756.90px;top:584.76px;font-size:9.5px;line-height:12.3px;font-weight:700;color:#1c2b33;letter-spacing:-0.252px;">Morning Thought…</span>
<span class="t m" style="left:756.90px;top:601.84px;font-size:7.9px;line-height:10.3px;font-weight:400;color:#34424a;letter-spacing:-0.132px;">Tue Nov 11, 7:00am</span>
<span class="t" style="left:767.10px;top:618.2px;font-size:8.6px;line-height:11.2px;font-weight:400;color:#3a4850;letter-spacing:-0.156px;">21.5K</span>
<span class="t" style="left:818.40px;top:618.2px;font-size:8.6px;line-height:11.2px;font-weight:400;color:#3a4850;letter-spacing:-0.167px;">370</span>
<svg class="abs" style="left:757.4px;top:619.6px" width="8" height="7" viewBox="0 0 8 7"><path d="M.5 3.500C1.500 1.700 2.700 1 4 1s2.500.7 3.500 2.500C6.500 5.300 5.300 6 4 6S1.500 5.300.5 3.500z" fill="none" stroke="#3a4850" stroke-width=".9"/><circle cx="4" cy="3.500" r="1.100" fill="#3a4850"/></svg>
<svg class="abs" style="left:808.4px;top:619.700px" width="8" height="7" viewBox="0 0 8 7"><path d="M4 6.600C1.500 4.800.3 3.500.3 2.200.3 1.100 1.100.3 2.200.3 2.900.3 3.600.7 4 1.300 4.400.7 5.100.3 5.800.3 6.900.3 7.700 1.100 7.700 2.200c0 1.300-1.200 2.600-3.700 4.400z" fill="#3a4850"/></svg>
<span class="t m" style="left:873.80px;top:601.84px;font-size:7.9px;line-height:10.3px;font-weight:400;color:#34424a;letter-spacing:-0.131px;">Thu Oct 23, 7:59am</span>
<span class="t" style="left:884.00px;top:618.2px;font-size:8.6px;line-height:11.2px;font-weight:400;color:#3a4850;letter-spacing:-0.156px;">21.3K</span>
<span class="t" style="left:935.30px;top:618.2px;font-size:8.6px;line-height:11.2px;font-weight:400;color:#3a4850;letter-spacing:-0.167px;">623</span>
<svg class="abs" style="left:874.3px;top:619.6px" width="8" height="7" viewBox="0 0 8 7"><path d="M.5 3.500C1.500 1.700 2.700 1 4 1s2.500.7 3.500 2.500C6.500 5.300 5.300 6 4 6S1.500 5.300.5 3.500z" fill="none" stroke="#3a4850" stroke-width=".9"/><circle cx="4" cy="3.500" r="1.100" fill="#3a4850"/></svg>
<svg class="abs" style="left:925.3px;top:619.700px" width="8" height="7" viewBox="0 0 8 7"><path d="M4 6.600C1.500 4.800.3 3.500.3 2.200.3 1.100 1.100.3 2.200.3 2.900.3 3.600.7 4 1.300 4.400.7 5.100.3 5.800.3 6.900.3 7.700 1.100 7.700 2.200c0 1.300-1.200 2.600-3.700 4.400z" fill="#3a4850"/></svg>
<span class="t" style="left:990.70px;top:572.36px;font-size:9.5px;line-height:12.3px;font-weight:700;color:#1c2b33;letter-spacing:-0.133px;">If</span>
<span class="t" style="left:990.70px;top:584.76px;font-size:9.5px;line-height:12.3px;font-weight:700;color:#1c2b33;letter-spacing:-0.188px;">la</span>
<span class="t m" style="left:990.70px;top:601.84px;font-size:7.9px;line-height:10.3px;font-weight:400;color:#34424a;letter-spacing:-0.164px;">Sa</span>
<svg class="abs" style="left:991.2px;top:619.6px" width="8" height="7" viewBox="0 0 8 7"><path d="M.5 3.500C1.500 1.700 2.700 1 4 1s2.500.7 3.500 2.500C6.500 5.300 5.300 6 4 6S1.500 5.300.5 3.500z" fill="none" stroke="#3a4850" stroke-width=".9"/></svg>
<span class="t" style="left:873.9px;top:571.2px;font-family:'DejaVu Sans',sans-serif;font-size:11.5px;line-height:14px;color:#8a6350">☕︎</span>
<span class="t" style="left:887.80px;top:572.36px;font-size:9.5px;line-height:12.3px;font-weight:700;color:#1c2b33;letter-spacing:-0.273px;">Morning Tracks</span>
<svg class="abs" role="img" aria-label="👣" style="left:957px;top:572.3px" width="11" height="11" viewBox="0 0 11 11"><g fill="#2f6fd0"><ellipse cx="3" cy="4.300" rx="2" ry="3.100" transform="rotate(-8 3 4.300)"/><ellipse cx="3.700" cy="8.900" rx="1.400" ry="1.200"/><ellipse cx="8" cy="3.400" rx="2" ry="3.100" transform="rotate(8 8 3.400)"/><ellipse cx="7.400" cy="8" rx="1.400" ry="1.200"/></g></svg>
<span class="t" style="left:874.20px;top:584.76px;font-size:9.5px;line-height:12.3px;font-weight:700;color:#1c2b33;letter-spacing:-0.245px;">If legends fade when…</span>
</div>

<svg class="abs" style="left:850px;top:225px" width="320" height="275" viewBox="850 225 320 275">
<defs><filter id="rough" x="-5%" y="-5%" width="110%" height="110%" color-interpolation-filters="sRGB"><feTurbulence type="fractalNoise" baseFrequency=".55" numOctaves="2" seed="7" result="n"/><feDisplacementMap in="SourceGraphic" in2="n" scale="2.200" xChannelSelector="R" yChannelSelector="G" result="d"/><feTurbulence type="fractalNoise" baseFrequency="1.100" numOctaves="2" seed="21" result="s"/><feColorMatrix in="s" type="matrix" values="0 0 0 0 1  0 0 0 0 1  0 0 0 0 1  9 0 0 0 -6.450" result="sp"/><feComposite in="d" in2="sp" operator="out"/></filter></defs>
<g fill="#dd0b0c" filter="url(#rough)">
<path fill-rule="evenodd" d="M943.3 240.8C948.7 241.5 955.8 243.7 960.0 244.6C964.2 245.5 966.0 246.4 968.3 246.2C970.6 246.0 972.0 244.2 974.0 243.6C976.0 243.0 976.2 242.0 980.0 242.5C983.8 243.0 991.7 244.6 996.7 246.7C1001.7 248.8 1005.6 251.4 1010.0 255.0C1014.4 258.6 1019.1 263.0 1023.3 268.3C1027.5 273.6 1031.7 279.8 1035.0 286.7C1038.3 293.6 1041.5 302.8 1043.3 310.0C1045.1 317.2 1045.5 324.2 1045.8 330.0C1046.1 335.8 1046.0 339.7 1045.0 345.0C1044.0 350.3 1042.2 356.4 1040.0 361.7C1037.8 367.0 1035.0 372.0 1031.7 376.7C1028.4 381.4 1024.2 386.1 1020.0 390.0C1015.8 393.9 1011.7 397.1 1006.7 400.0C1001.7 402.9 995.6 405.7 990.0 407.5C984.4 409.3 978.8 410.4 973.3 410.8C967.8 411.2 962.5 411.0 956.7 410.0C950.9 409.0 944.4 407.2 938.3 405.0C932.2 402.8 925.8 400.0 920.0 396.7C914.2 393.4 908.3 389.4 903.3 385.0C898.3 380.6 893.9 375.3 890.0 370.0C886.1 364.7 882.8 358.8 880.0 353.3C877.2 347.8 875.1 342.4 873.4 336.9C871.7 331.3 870.7 325.3 870.0 320.0C869.3 314.7 869.1 309.2 869.2 305.0C869.3 300.8 869.9 298.0 870.4 295.0C870.9 292.0 871.2 290.5 872.3 287.0C873.3 283.5 874.9 277.9 876.7 274.2C878.5 270.5 880.6 267.9 883.1 264.7C885.6 261.5 888.8 257.9 892.0 255.1C895.2 252.3 898.4 250.1 902.2 248.1C906.0 246.1 910.8 244.2 915.0 243.0C919.2 241.8 923.0 241.0 927.7 240.6C932.4 240.2 937.9 240.1 943.3 240.8ZM943.3 249.3C944.9 249.8 949.4 251.0 953.0 252.2C956.6 253.3 960.8 254.6 964.8 256.2C968.8 257.8 972.0 258.3 976.7 261.7C981.5 265.1 988.0 271.5 993.3 276.7C998.6 281.9 1005.8 290.3 1008.3 293.0L1017.6 287.8C1018.1 288.3 1018.7 287.3 1020.5 291.0C1022.3 294.7 1026.4 304.0 1028.3 310.0C1030.2 316.0 1031.3 321.2 1031.9 327.0C1032.5 332.8 1032.3 339.2 1031.7 345.0C1031.1 350.8 1030.0 356.7 1028.3 361.7C1026.6 366.7 1024.5 371.0 1021.7 375.0C1018.9 379.0 1015.6 382.6 1011.7 385.8C1007.8 389.0 1003.0 392.0 998.3 394.2C993.6 396.4 988.6 398.2 983.3 399.2C978.0 400.2 972.2 400.6 966.7 400.0C961.2 399.4 955.6 397.8 950.0 395.8C944.4 393.9 938.8 391.5 933.3 388.3C927.8 385.1 921.7 380.9 916.7 376.7C911.7 372.5 907.2 368.0 903.3 363.3C899.4 358.6 895.9 353.3 893.3 348.3C890.7 343.3 889.0 338.0 887.5 333.3C886.0 328.6 885.2 323.9 884.5 320.0C883.8 316.1 883.3 313.4 883.1 310.0C882.9 306.6 882.9 303.5 883.2 299.7C883.5 295.9 884.0 291.2 885.0 287.0C886.0 282.8 887.7 277.8 889.5 274.2C891.3 270.6 893.7 267.9 895.8 265.3C897.9 262.7 900.2 260.2 902.2 258.3C904.2 256.4 905.9 255.3 908.0 254.2C910.1 253.1 911.7 252.7 915.0 251.9C918.3 251.1 923.0 250.0 927.7 249.6C932.4 249.2 940.7 249.4 943.3 249.3ZM1017.8 287.0L1002.6 267.8L988.3 254.5L981.5 250.2L982.1 249.7L988.9 253.7L1003.3 267.1L1018.5 286.2Z"/>
<path d="M975.8 353.3L975.8 353.3C977.8 352.6 983.7 350.6 988.0 349.2C992.3 347.8 996.0 346.6 1001.7 345.0C1007.5 343.4 1019.0 340.7 1022.5 339.8L1024.4 341.5L1023 344.6L1023.0 344.6C1021.8 345.2 1017.8 347.2 1015.5 348.5C1013.2 349.8 1010.5 351.7 1009.5 352.3L1009.5 352.3C1012.4 353.7 1021.1 357.7 1026.7 360.5C1032.3 363.3 1037.7 366.2 1043.3 369.3C1048.9 372.4 1053.2 374.4 1060.3 379.3C1067.4 384.2 1077.9 392.2 1086.0 398.8C1094.1 405.4 1101.8 411.9 1109.0 418.8C1116.2 425.7 1123.3 433.4 1129.0 440.3C1134.7 447.2 1139.0 453.5 1143.3 460.4C1147.6 467.3 1152.9 478.2 1154.8 481.8L1149 485.8L1141.9 487.6L1141.9 487.6C1140.2 484.0 1136.4 473.5 1131.9 466.1C1127.4 458.7 1120.9 450.6 1114.7 443.2C1108.5 435.8 1101.8 428.6 1094.6 421.7C1087.4 414.8 1077.5 406.4 1071.7 401.6C1065.9 396.8 1064.3 395.8 1060.0 392.9C1055.7 390.0 1051.5 387.3 1045.9 384.0C1040.4 380.7 1033.2 376.7 1026.7 373.3C1020.2 369.9 1010.2 365.4 1006.9 363.8L1012.5 375.3L1003.2 380.9L1003.2 380.9C1002.4 380.4 1000.5 380.6 998.3 378.0C996.1 375.4 992.5 368.5 990.0 365.3C987.5 362.1 985.4 360.8 983.0 358.8C980.6 356.8 977.0 354.2 975.8 353.3Z"/>
</g>
</svg>

</div></div>

<div class="abs" style="left:1177.6px;top:25px;width:1px;height:355px;background:rgba(255,255,255,.8)"></div>
<div class="abs" style="left:1178.3px;top:25px;width:1.4px;height:355.5px;background:#4b5d80"></div>

</body></html>
